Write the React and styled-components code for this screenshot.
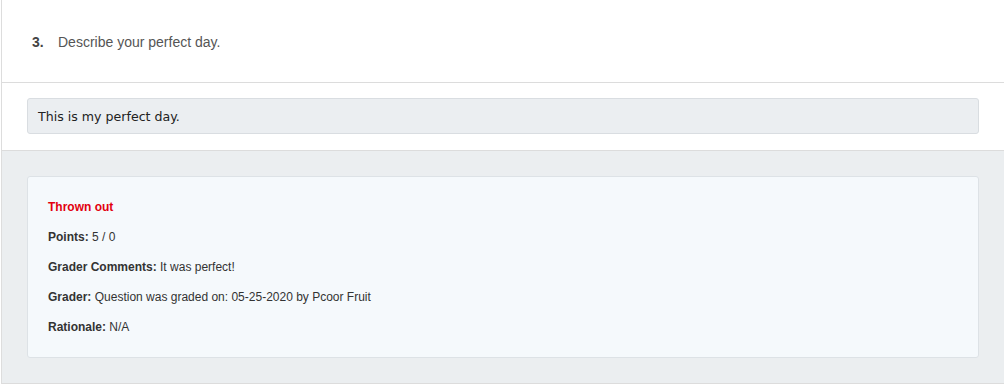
import React from "react";
import styled, { createGlobalStyle } from "styled-components";

const Global = createGlobalStyle`
  html, body { margin: 0; padding: 0; background: #fff; }
  body { font-family: "Liberation Sans", Arial, sans-serif; overflow: hidden; }
`;

const Card = styled.div`
  width: 1003px;
  border-left: 1px solid #dddddd;
  border-bottom: 1px solid #dcdcdc;
  margin-left: 1px;
  box-sizing: border-box;
`;

const Header = styled.div`
  height: 83px;
  display: flex;
  align-items: center;
  padding: 1px 0 0 30px;
  box-sizing: border-box;
  border-bottom: 1px solid #dcdcdc;
  font-size: 14px;
  color: #555;
`;

const Number = styled.span`
  width: 26px;
  font-weight: bold;
  color: #444;
`;

const AnswerSection = styled.div`
  padding: 15px 25px 16px 25px;
  border-bottom: 1px solid #dcdcdc;
  background: #fff;
`;

const AnswerBox = styled.div`
  height: 34px;
  display: flex;
  align-items: center;
  padding-left: 10px;
  background: #ebeef1;
  border: 1px solid #d9dde1;
  border-radius: 3px;
  font-family: "DejaVu Sans", Verdana, sans-serif;
  font-size: 12.6px;
  color: #222;
`;

const ResultSection = styled.div`
  background: #ebeef0;
  padding: 25px 25px 25px 25px;
`;

const ResultCard = styled.div`
  background: #f5f9fc;
  border: 1px solid #dde2e6;
  border-radius: 3px;
  padding: 21px 20px 21px 20px;
  display: flex;
  flex-direction: column;
  gap: 12px;
`;

const Row = styled.div`
  font-size: 12px;
  line-height: 18px;
  color: ${(p) => (p.$alert ? "#e2000f" : "#333")};
  font-weight: ${(p) => (p.$alert ? "bold" : "normal")};
`;

const Label = styled.b`
  color: #333;
`;

export default function App() {
  return (
    <>
      <Global />
      <Card>
        <Header>
          <Number>3.</Number>
          <span>Describe your perfect day.</span>
        </Header>
        <AnswerSection>
          <AnswerBox>This is my perfect day.</AnswerBox>
        </AnswerSection>
        <ResultSection>
          <ResultCard>
            <Row $alert>Thrown out</Row>
            <Row><Label>Points:</Label> 5 / 0</Row>
            <Row><Label>Grader Comments:</Label> It was perfect!</Row>
            <Row><Label>Grader:</Label> Question was graded on: 05-25-2020 by Pcoor Fruit</Row>
            <Row><Label>Rationale:</Label> N/A</Row>
          </ResultCard>
        </ResultSection>
      </Card>
    </>
  );
}
